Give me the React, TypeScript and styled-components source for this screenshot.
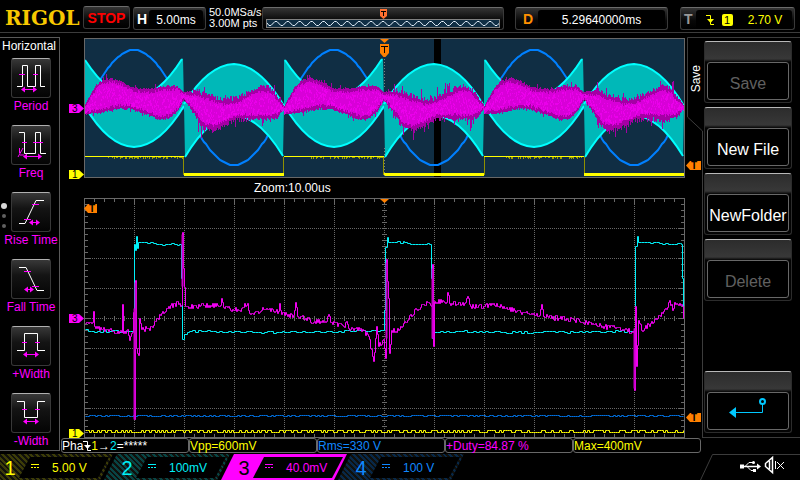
import React from "react";
import styled, { createGlobalStyle, css } from "styled-components";

const C = {
  yellow: "#ffff00",
  cyan: "#00f0f8",
  magenta: "#ff00ff",
  blue: "#0080ff",
  orange: "#ff8000",
  panel: "#102e44",
  line: "#3c3c3c",
  frame: "#686868",
};

const Global = createGlobalStyle`
  * { box-sizing: border-box; }
  body { margin: 0; background: #000; }
  button { font: inherit; color: inherit; background: none; border: 0; padding: 0; cursor: pointer; }
`;

const Screen = styled.div`
  display: flex;
  flex-direction: column;
  min-height: 100vh;
  background: #000;
  color: #fff;
  font-family: "Liberation Sans", Arial, sans-serif;
  font-size: 12px;
  line-height: 14px;
  overflow: hidden;
`;

/* ---------- header ---------- */

const Header = styled.header`
  display: flex;
  align-items: flex-start;
  height: 33px;
  padding: 7px 5px 0 5px;
  border-bottom: 1px solid ${C.line};
`;

const Logo = styled.h1`
  margin: 0;
  width: 78px;
  font-family: "DejaVu Serif", serif;
  font-weight: 700;
  font-size: 20px;
  line-height: 22px;
  color: #f8c800;
`;

const panel = css`
  height: 23px;
  border: 1px solid #3a3a3a;
  border-top-color: #6c6c6c;
  border-radius: 3px;
  background: linear-gradient(#343434, #080808 60%, #000);
`;

const RunState = styled.button`
  ${panel}
  width: 47px;
  margin-top: -1px;
  margin-right: 3px;
  font-weight: 700;
  font-size: 14px;
  line-height: 20px;
  color: #ff0000;
`;

const Setting = styled.button<{ $width: number; $gap?: number }>`
  ${panel}
  display: flex;
  align-items: center;
  width: ${(p) => p.$width}px;
  margin-left: ${(p) => p.$gap ?? 0}px;
  padding-left: 2px;
`;

const SettingName = styled.b<{ $color?: string; $wide?: boolean }>`
  width: ${(p) => (p.$wide ? 20 : 13)}px;
  padding-left: ${(p) => (p.$wide ? 5 : 1)}px;
  font-size: 14px;
  text-align: left;
  color: ${(p) => p.$color ?? "#fff"};
`;

const SettingValue = styled.span<{ $color?: string }>`
  flex: 1;
  display: flex;
  align-items: center;
  justify-content: center;
  align-self: stretch;
  gap: 8px;
  margin: 2px 2px 0 0;
  border-radius: 3px;
  background: #000;
  color: ${(p) => p.$color ?? "#fff"};
`;

const ChannelTag = styled.span`
  width: 11px;
  margin-right: 7px;
  border-radius: 2px;
  background: ${C.yellow};
  color: #000;
  font-size: 11px;
  line-height: 12px;
`;

const Sampling = styled.div`
  width: 54px;
  margin-left: 3px;
  margin-right: -1px;
  font-size: 11px;
  line-height: 11px;
  white-space: nowrap;
`;

const Memory = styled.div`
  ${panel}
  display: flex;
  flex-direction: column;
  align-items: center;
  flex: 1;
  padding: 1px 3px 1px;
`;

const MemoryStrip = styled.svg`
  display: block;
  width: 100%;
  height: 9px;
  border: 1px solid #808080;
  background: ${C.panel};
`;

/* ---------- main area ---------- */

const Main = styled.main`
  display: grid;
  grid-template-columns: 60px minmax(0, 1fr) 98px;
  grid-template-rows: 401px 15px;
  padding-top: 4px;
`;

const Sidebar = styled.aside`
  position: relative;
  grid-row: 1 / 3;
  height: 414px;
  border: 1px solid #5a5a5a;
  border-left: 0;
`;

const SidebarTitle = styled.h2`
  margin: 0 0 4px;
  padding-left: 2px;
  font-size: 12px;
  font-weight: 400;
  line-height: 16px;
  white-space: nowrap;
`;

const MeasureList = styled.div`
  display: flex;
  flex-direction: column;
  gap: 11px;
`;

const MeasureButton = styled.button`
  display: flex;
  flex-direction: column;
  align-items: center;
  width: 62px;
  height: 56px;
  color: ${C.magenta};
  white-space: nowrap;
  line-height: 16px;
`;

const MeasureIcon = styled.svg`
  display: block;
  flex: none;
  width: 40px;
  height: 40px;
  border: 1px solid #383838;
  border-top-color: #b0b0b0;
  border-radius: 3px;
  background: linear-gradient(#383838, #141414 40%, #040404);
`;

const PageDots = styled.svg`
  position: absolute;
  left: 0;
  top: 163px;
  width: 8px;
  height: 30px;
`;

const PlotArea = styled.section`
  display: grid;
  grid-template-columns: 24px minmax(0, 1fr) 17px;
  grid-template-rows: 140px 20px 240px;
  padding-top: 1px;
`;

const Gutter = styled.div`
  position: relative;
  grid-column: 1;
  grid-row: 1 / 4;
`;

const TabGutter = styled.div`
  position: relative;
  grid-column: 3;
  grid-row: 1 / 4;
  margin-top: -1px;
`;

const PlotBox = styled.div<{ $row: number }>`
  position: relative;
  grid-column: 2;
  grid-row: ${(p) => p.$row};
`;

const PlotSvg = styled.svg`
  display: block;
  width: 100%;
  height: 100%;
`;

const ZoomLabel = styled.div`
  grid-column: 2;
  grid-row: 2;
  padding-left: 170px;
  line-height: 20px;
`;

const ChannelMarker = styled.span<{ $top: number; $color: string }>`
  position: absolute;
  left: 9px;
  top: ${(p) => p.$top}px;
  width: 15px;
  height: 9px;
  padding-left: 3px;
  background: ${(p) => p.$color};
  clip-path: polygon(0 0, 10px 0, 100% 50%, 10px 100%, 0 100%);
  color: #000;
  font-size: 10px;
  line-height: 10px;
`;

const LevelMarker = styled.span<{ $top: number; $left: number; $width: number }>`
  position: absolute;
  left: ${(p) => p.$left}px;
  top: ${(p) => p.$top}px;
  width: ${(p) => p.$width}px;
  height: 9px;
  padding-left: 5px;
  background: ${C.orange};
  clip-path: polygon(0 50%, 4px 0, 100% 0, 100% 100%, 4px 100%);
  color: #000;
  font-size: 10px;
  font-weight: 700;
  line-height: 10px;
`;

const TabOutline = styled.svg`
  position: absolute;
  top: 0;
  left: 0;
  width: 18px;
  height: 401px;
`;

const TabLabel = styled.span`
  position: absolute;
  left: 4px;
  top: 28px;
  writing-mode: vertical-rl;
  transform: rotate(180deg);
`;

const TriggerPointer = styled.svg`
  position: absolute;
  left: 50%;
  top: 1px;
  margin-left: -5px;
  width: 10px;
  height: 19px;
`;

const Menu = styled.nav`
  display: flex;
  flex-direction: column;
  align-items: flex-start;
  gap: 4px;
  padding: 3px 2px 4px;
  border: solid ${C.line};
  border-width: 1px 0;
`;

const MenuButton = styled.button<{ $last?: boolean }>`
  width: 88px;
  height: 62px;
  margin-top: ${(p) => (p.$last ? "auto" : "0")};
  padding: 20px 2px 2px;
  border: 1px solid #2c2c2c;
  border-top: 1px solid #b8b8b8;
  border-radius: 3px;
  background: linear-gradient(#2c2c2c, #383838 17px, #040404 20px);
  &:disabled { color: #606060; }
`;

const MenuFace = styled.span`
  display: flex;
  align-items: center;
  justify-content: center;
  height: 38px;
  padding-top: 6px;
  border: 1px solid #686868;
  border-radius: 3px;
  background: #000;
  font-size: 16px;
  white-space: nowrap;
`;

const BackFace = styled(MenuFace)`
  padding: 0 0 4px;
`;

const Results = styled.ul`
  grid-column: 2 / 4;
  display: grid;
  grid-template-columns: repeat(5, 1fr);
  margin: 0 99px 0 1px;
  padding: 0;
  list-style: none;
`;

const Result = styled.li<{ $color?: string }>`
  display: flex;
  align-items: center;
  height: 15px;
  border: 1px solid #686868;
  border-radius: 3px;
  color: ${(p) => p.$color ?? "#fff"};
  white-space: pre;
`;

const Yellow = styled.span`
  color: ${C.yellow};
`;

const Cyan = styled.span`
  color: ${C.cyan};
`;

/* ---------- footer ---------- */

const Footer = styled.footer`
  display: flex;
  justify-content: space-between;
  padding-top: 1px;
  height: 27px;
`;

const Channels = styled.div`
  display: flex;
  margin-left: -13px;
`;

const ChannelButton = styled.button<{ $color: string; $dim: string; $active?: boolean }>`
  display: flex;
  width: 126px;
  height: 26px;
  margin-right: -9px;
  padding: 3px 4px 2px 14px;
  color: ${(p) => p.$color};
  clip-path: polygon(13px 0, 100% 0, calc(100% - 13px) 100%, 0 100%);
  background: ${(p) =>
    p.$active ? p.$color : `repeating-linear-gradient(45deg, ${p.$dim} 0 2px, #10100c 2px 4px)`};
`;

const ChannelNumber = styled.span<{ $active?: boolean }>`
  width: 18px;
  font-size: 20px;
  line-height: 22px;
  color: ${(p) => (p.$active ? "#000" : "inherit")};
`;

const ChannelScale = styled.span`
  display: flex;
  align-items: center;
  flex: 1;
  height: 21px;
  padding-left: 12px;
  gap: 13px;
  background: #000;
  clip-path: polygon(11px 0, 100% 0, calc(100% - 11px) 100%, 0 100%);
  white-space: nowrap;
`;

const Coupling = styled.svg`
  width: 8px;
  height: 8px;
  flex: none;
`;

const Status = styled.div`
  width: 100px;
`;

/* ---------- signal data ---------- */

type Pt = [number, number];

function noise(seed: number) {
  let s = seed;
  return () => {
    s = (s * 1664525 + 1013904223) >>> 0;
    return s / 4294967296;
  };
}

function interp(pts: Pt[], x: number) {
  for (let i = 1; i < pts.length; i++) {
    if (x <= pts[i][0]) {
      const [x0, y0] = pts[i - 1];
      const [x1, y1] = pts[i];
      return y0 + ((y1 - y0) * (x - x0)) / (x1 - x0);
    }
  }
  return pts[pts.length - 1][1];
}

const evenTop: Pt[] = [[0, 68], [9, 52], [16, 44], [26, 41], [36, 44], [49, 51], [66, 52], [79, 49], [93, 49], [100, 55]];
const evenBottom: Pt[] = [[0, 76], [16, 74], [33, 70], [46, 70], [63, 76], [76, 81], [84, 80], [93, 73], [100, 61]];
const oddTop: Pt[] = [[0, 54], [13, 55], [23, 59], [39, 64], [53, 62], [66, 55], [78, 50], [86, 52], [93, 60], [100, 68]];
const oddBottom: Pt[] = [[0, 62], [11, 76], [19, 88], [29, 90], [39, 86], [53, 79], [66, 79], [83, 80], [93, 78], [100, 70]];

function overviewPaths() {
  const r = noise(41);
  let outer = "";
  let core = "";
  let bright = "";
  for (let x = 1; x < 600; x++) {
    const odd = Math.floor(x / 100) % 2 === 1;
    const k = x % 100;
    const edge = Math.min(1, Math.min(k, 100 - k) / 12);
    const t = interp(odd ? oddTop : evenTop, k);
    const b = interp(odd ? oddBottom : evenBottom, k);
    const spike = odd ? 5 : 2;
    const up = (r() * spike + (r() > 0.9 ? r() * spike * 2 : 0)) * edge;
    const down = (r() * spike + (r() > 0.92 ? r() * spike * 2 : 0)) * edge;
    outer += `M${x}.5 ${Math.round(t - up)}V${Math.round(b + down)}`;
    core += `M${x}.5 ${Math.round(t + 1 + r() * 3)}V${Math.round(b - 1 - r() * 3)}`;
    for (let i = 0; i < 3; i++) {
      const y = Math.round(t + (b - t) * (0.15 + 0.7 * r()));
      bright += `M${x}.5 ${y}v${1 + Math.round(r() * 2)}`;
    }
  }
  return { outer, core, bright };
}

function arch(start: number, mid: number, amp: number) {
  let d = "";
  for (let k = 0; k <= 100; k += 2) {
    d += `${k ? "L" : "M"}${start + k} ${Math.round(mid + amp * Math.sin((Math.PI * k) / 100))}`;
  }
  return d;
}

const cyanEven = (s: number) => ({
  fill: `M${s} 21Q${s + 50} 97 ${s + 99} 20L${s + 100} 68Q${s + 76} 108 ${s + 50} 109Q${s + 24} 108 ${s} 67Z`,
  rim: `M${s + 1} 22Q${s + 50} 97 ${s + 98} 21M${s} 67Q${s + 24} 108 ${s + 50} 109Q${s + 76} 108 ${s + 100} 68`,
});
const cyanOdd = (s: number) => ({
  fill: `M${s} 66Q${s + 24} 27 ${s + 50} 26Q${s + 76} 27 ${s + 100} 68L${s + 99} 118Q${s + 50} 37 ${s + 1} 119Z`,
  rim: `M${s} 66Q${s + 24} 27 ${s + 50} 26Q${s + 76} 27 ${s + 100} 68M${s + 1} 119Q${s + 50} 37 ${s + 99} 118`,
});

function yellowFuzz() {
  const r = noise(9);
  let d = "";
  for (const s of [0, 200, 400]) {
    for (let x = s + 22; x < s + 99; x++) if (r() > 0.45) d += `M${x}.5 119v${1 + Math.round(r())}`;
  }
  return d;
}

function trace(points: Pt[], step: number, amp: number, seed: number) {
  const r = noise(seed);
  let d = `M${points[0][0]} ${points[0][1]}`;
  for (let i = 1; i < points.length; i++) {
    const [x0, y0] = points[i - 1];
    const [x1, y1] = points[i];
    for (let x = x0 + step; x < x1; x += step) {
      const y = y0 + ((y1 - y0) * (x - x0)) / (x1 - x0) + (r() - 0.5) * amp;
      d += `H${x}V${Math.round(y)}`;
    }
    d += `H${x1}V${y1}`;
  }
  return d;
}

const cyanTrace: Pt[] = [
  [1, 131], [4, 133], [49, 133], [50, 46], [51, 52], [52, 38], [53, 50], [54, 44], [66, 44], [72, 46], [95, 46],
  [97, 80], [98, 141], [100, 136], [105, 133], [200, 134], [298, 132], [300, 112], [301, 49], [303, 39], [304, 44],
  [320, 44], [328, 46], [345, 46], [347, 80], [348, 140], [350, 134], [362, 133], [450, 134], [549, 133], [551, 48], [553, 38],
  [554, 44], [575, 45], [597, 46], [598, 80], [599, 115],
];

const magentaTrace: Pt[] = [
  [1, 125], [6, 124], [8, 124], [9, 113], [10, 128], [17, 131], [28, 133], [37, 134], [38, 106], [39, 135], [43, 131],
  [45, 142], [48, 134], [49, 114], [50, 221], [51, 82], [52, 150], [54, 157], [55, 120], [57, 131], [68, 129],
  [72, 120], [80, 114], [90, 105], [97, 107], [98, 34], [99, 70], [101, 108], [120, 107], [136, 107], [137, 100],
  [139, 109], [155, 112], [163, 105], [165, 115], [180, 111], [194, 113], [195, 105], [197, 116], [209, 117],
  [211, 104], [213, 118], [230, 123], [242, 123], [244, 116], [246, 124], [260, 129], [262, 123], [265, 132],
  [276, 130], [284, 138], [289, 163], [291, 140], [292, 128], [294, 148], [299, 141], [301, 160], [302, 61],
  [304, 100], [305, 155], [307, 132], [314, 132], [321, 124], [332, 111], [344, 104], [347, 108], [348, 66],
  [349, 148], [350, 103], [362, 104], [363, 94], [365, 105], [380, 105], [383, 98], [386, 108], [410, 107],
  [430, 112], [455, 117], [457, 106], [459, 118], [490, 122], [520, 128], [540, 131], [549, 134], [550, 192],
  [551, 108], [552, 168], [554, 122], [558, 133], [564, 126], [574, 117], [582, 111], [585, 102], [588, 112],
  [590, 104], [598, 108], [599, 120],
];

function comb(y: number, amp: number, seed: number) {
  const r = noise(seed);
  let d = `M1 ${y}`;
  for (let x = 3; x < 600; x += 2) d += `H${x}V${y + (r() > 0.45 ? amp : 0)}`;
  return d;
}

function ticks() {
  let d = "";
  for (let x = 10; x < 600; x += 10) {
    const n = x % 50 === 0 ? 6 : 4;
    d += `M${x}.5 0v${n}M${x}.5 240v-${n}M${x}.5 118v5`;
  }
  for (let y = 6; y < 240; y += 6) {
    const n = y % 30 === 0 ? 6 : 4;
    d += `M0 ${y}.5h${n}M601 ${y}.5h-${n}M298 ${y}.5h5`;
  }
  return d;
}

/* ---------- drawings ---------- */

const TIcon = ({ pointer = true }: { pointer?: boolean }) => (
  <TriggerPointer viewBox="0 0 10 19" aria-hidden="true">
    <path d="M0 0H9L4.500 4Z" fill={C.orange} />
    {pointer && (
      <>
        <path d="M0 5H9V14L5.500 18H3.500L0 14Z" fill={C.orange} />
        <path d="M1 7.500H8M4.500 7V14" stroke="#000" fill="none" />
      </>
    )}
  </TriggerPointer>
);

const FallingEdge = ({ color }: { color: string }) => (
  <svg width="8" height="12" viewBox="0 0 8 12" fill="none" stroke={color} aria-hidden="true">
    <path d="M0 1.500H4.500V10.500H8" />
    <path d="M1 5H8L4.500 9Z" fill={color} stroke="none" />
  </svg>
);

const Overview = () => {
  const m = overviewPaths();
  const even = [0, 200, 400];
  const odd = [100, 300, 500];
  return (
    <PlotSvg viewBox="0 0 601 140" preserveAspectRatio="none" role="img" aria-label="Full memory waveform">
      <rect width="601" height="140" fill={C.panel} />
      <rect x="350" width="7" height="140" fill="#000" />
      <g fill="none" stroke={C.blue} strokeWidth="2">
        {even.map((s) => <path key={s} d={arch(s, 70, -58)} />)}
        {odd.map((s) => <path key={s} d={arch(s, 70, 57)} />)}
      </g>
      {[...even.map(cyanEven), ...odd.map(cyanOdd)].map((c, i) => (
        <g key={i}>
          <path d={c.fill} fill="#00b8b8" />
          <path d={c.rim} fill="none" stroke="#00ffff" strokeWidth="2" />
        </g>
      ))}
      <path d={m.outer} stroke="#a400a4" />
      <path d={m.core} stroke="#d800d8" />
      <path d={m.bright} stroke="#f400f4" opacity="0.7" />
      <path d="M99.500 119V137M199.500 119V137M299.500 119V137M400.500 119V137M500.500 119V137" stroke="#909000" />
      <path d={yellowFuzz()} stroke="#a0a000" />
      {even.map((s) => <path key={s} d={`M${s} 118.500h100`} stroke={C.yellow} strokeWidth="1" />)}
      {odd.map((s) => <path key={s} d={`M${s} 136.500h100`} stroke={C.yellow} strokeWidth="3" />)}
      <path d="M300.500 18V50M300.500 110V140" stroke="#808080" strokeDasharray="1 2" />
      <rect x="0.500" y="0.500" width="600" height="139" fill="none" stroke={C.frame} />
    </PlotSvg>
  );
};

const Detail = () => (
  <PlotSvg viewBox="0 0 601 240" preserveAspectRatio="none" role="img" aria-label="Zoomed waveform">
    <g stroke="#686868" strokeDasharray="1 1" shapeRendering="crispEdges">
      {Array.from({ length: 11 }, (_, i) => (
        <path key={`v${i}`} d={`M${(i + 1) * 50}.5 0V240`} />
      ))}
      {Array.from({ length: 7 }, (_, i) => (
        <path key={`h${i}`} d={`M0 ${(i + 1) * 30}.5H601`} />
      ))}
    </g>
    <path d={ticks()} stroke="#686868" />
    <rect x="0.500" y="0.500" width="600" height="239" fill="none" stroke={C.frame} />
    <g fill="none" transform="translate(0.5 0.5)">
      <path d={comb(218, -1, 3)} stroke="#0070e0" />
      <path d={comb(232, 2, 5)} stroke={C.yellow} />
      <path d={trace(cyanTrace, 3, 1.8, 7)} stroke={C.cyan} />
      <path d={trace(magentaTrace, 1, 5, 23)} stroke="#f000f0" />
      <path d="M50 110V221M51 84V150M98 36V88M302 64V140M550 130V190M348 70V140" stroke="#cc00cc" strokeWidth="2" />
    </g>
  </PlotSvg>
);

type Measure = { name: string; wave: string; marks: string; arrow: [number, number, number]; over?: string };

const measures: Measure[] = [
  { name: "Period", wave: "M6 28.500H11.500V7.500H16.500V28.500H24.500V7.500H29.500V28.500H34", marks: "M8 16.500H14M22 16.500H27", arrow: [11, 25, 31] },
  { name: "Freq", wave: "M8 7.500H13.500V28.500H24.500V7.500H29.500V28.500H35", marks: "M11 17.500H16M22 17.500H32", arrow: [13, 30, 31], over: "M8.500 23V28M12 23L7 32M9 30H13" },
  { name: "Rise Time", wave: "M8 31.500H14L25 8.500H33", marks: "M21 12.500H28M13 27.500H20", arrow: [19, 28, 30] },
  { name: "Fall Time", wave: "M8 8.500H15L26 31.500H33", marks: "M13 12.500H20M21 27.500H28", arrow: [14, 22, 30] },
  { name: "+Width", wave: "M6 24.500H13.500V7.500H26.500V24.500H34", marks: "M11 16.500H16M24 16.500H29", arrow: [13, 27, 28] },
  { name: "-Width", wave: "M6 8.500H13.500V24.500H26.500V8.500H34", marks: "M11 16.500H16M24 16.500H29", arrow: [13, 27, 28] },
];

const channels = [
  { n: "1", scale: "5.00 V", color: C.yellow, dim: "#3c3c08" },
  { n: "2", scale: "100mV", color: C.cyan, dim: "#084444" },
  { n: "3", scale: "40.0mV", color: C.magenta, dim: C.magenta, active: true },
  { n: "4", scale: "100 V", color: "#1088ff", dim: "#082848" },
];

function memoryWave() {
  let d = "M0 3";
  for (let x = 2; x < 234; x += 12) d += `L${x} 5.500H${x + 2}L${x + 6} 1.500H${x + 8}`;
  return d;
}

export default function App() {
  return (
    <Screen>
      <Global />
      <Header>
        <Logo>RIGOL</Logo>
        <RunState type="button">STOP</RunState>
        <Setting type="button" $width={73}>
          <SettingName>H</SettingName>
          <SettingValue>5.00ms</SettingValue>
        </Setting>
        <Sampling>
          50.0MSa/s
          <br />
          3.00M pts
        </Sampling>
        <Memory>
          <svg width="7" height="10" viewBox="0 0 7 10" aria-hidden="true">
            <path d="M0 0H7V7L3.500 10L0 7Z" fill="#ff7030" />
            <path d="M1 2.500H6M3.500 2V7" stroke="#000" />
          </svg>
          <MemoryStrip viewBox="0 0 234 7" preserveAspectRatio="none" aria-label="Memory position">
            <path d={memoryWave()} fill="none" stroke="#e8f4ff" />
          </MemoryStrip>
        </Memory>
        <Setting type="button" $width={153} $gap={11}>
          <SettingName $wide $color="#ff9000">D</SettingName>
          <SettingValue>5.29640000ms</SettingValue>
        </Setting>
        <Setting type="button" $width={115} $gap={12}>
          <SettingName $color="#989898">T</SettingName>
          <SettingValue $color={C.yellow}>
            <FallingEdge color={C.yellow} />
            <ChannelTag>1</ChannelTag>
            <span>2.70 V</span>
          </SettingValue>
        </Setting>
      </Header>

      <Main>
        <Sidebar>
          <SidebarTitle>Horizontal</SidebarTitle>
          <MeasureList>
            {measures.map((m) => {
              const [a, b, y] = m.arrow;
              return (
                <MeasureButton type="button" key={m.name}>
                  <MeasureIcon viewBox="1 1 38 38" fill="none" aria-hidden="true">
                    <path d={m.wave} stroke="#fff" />
                    <path d={m.marks} stroke={C.magenta} />
                    {m.over && <path d={m.over} stroke={C.magenta} />}
                    <path d={`M${a} ${y}.5H${b}`} stroke={C.magenta} />
                    <path d={`M${a - 1} ${y}.5l4 -3v6zM${b + 1} ${y}.5l-4 -3v6z`} fill={C.magenta} />
                  </MeasureIcon>
                  {m.name}
                </MeasureButton>
              );
            })}
          </MeasureList>
          <PageDots viewBox="0 0 8 30" aria-hidden="true">
            <circle cx="4" cy="5" r="3" fill="#d8d8d8" />
            <circle cx="4" cy="15" r="2" fill="#606060" />
            <circle cx="4" cy="25" r="2" fill="#606060" />
          </PageDots>
        </Sidebar>

        <PlotArea>
          <Gutter>
            <ChannelMarker $top={66} $color={C.magenta}>3</ChannelMarker>
            <ChannelMarker $top={132} $color={C.yellow}>1</ChannelMarker>
            <ChannelMarker $top={276} $color={C.magenta}>3</ChannelMarker>
            <ChannelMarker $top={391} $color={C.yellow}>1</ChannelMarker>
          </Gutter>
          <PlotBox $row={1}>
            <Overview />
            <TIcon />
          </PlotBox>
          <ZoomLabel>Zoom:10.00us</ZoomLabel>
          <PlotBox $row={3}>
            <Detail />
            <TIcon pointer={false} />
            <LevelMarker $left={0} $top={6} $width={13}>T</LevelMarker>
          </PlotBox>
          <TabGutter>
            <TabOutline viewBox="0 0 18 401" fill="none" stroke={C.line} aria-hidden="true">
              <path d="M18 0.500H2.500V80L17.500 94V401" />
            </TabOutline>
            <TabLabel>Save</TabLabel>
            <LevelMarker $left={1} $top={124} $width={15}>T</LevelMarker>
            <LevelMarker $left={1} $top={376} $width={15}>T</LevelMarker>
          </TabGutter>
        </PlotArea>

        <Menu aria-label="Save">
          <MenuButton type="button" disabled><MenuFace>Save</MenuFace></MenuButton>
          <MenuButton type="button"><MenuFace>New File</MenuFace></MenuButton>
          <MenuButton type="button"><MenuFace>NewFolder</MenuFace></MenuButton>
          <MenuButton type="button" disabled><MenuFace>Delete</MenuFace></MenuButton>
          <MenuButton type="button" $last aria-label="Back">
            <BackFace>
              <svg width="38" height="22" viewBox="0 0 38 22" fill="none" aria-hidden="true">
                <path d="M4 14.500H33.500V6" stroke="#00c8ff" />
                <path d="M0 14.500L7 9V20Z" fill="#00c8ff" />
                <circle cx="33.500" cy="3.500" r="2.500" stroke="#00c8ff" strokeWidth="2" />
              </svg>
            </BackFace>
          </MenuButton>
        </Menu>

        <Results>
          <Result>
            Pha
            <FallingEdge color="#fff" />
            <span><Yellow>1</Yellow>→<Cyan>2</Cyan>=*****</span>
          </Result>
          <Result $color={C.yellow}>Vpp=600mV</Result>
          <Result $color="#1088ff">Rms=330 V</Result>
          <Result $color={C.magenta}>+Duty=84.87 %</Result>
          <Result $color={C.yellow}>Max=400mV</Result>
        </Results>
      </Main>

      <Footer>
        <Channels>
          {channels.map((c) => (
            <ChannelButton type="button" key={c.n} $color={c.color} $dim={c.dim} $active={c.active}>
              <ChannelNumber $active={c.active}>{c.n}</ChannelNumber>
              <ChannelScale>
                <Coupling viewBox="0 0 8 8" stroke="currentColor" aria-hidden="true">
                  <path d="M0 0.500H8" />
                  <path d="M0 3.500H8" strokeDasharray="2 1" />
                </Coupling>
                {c.scale}
              </ChannelScale>
            </ChannelButton>
          ))}
        </Channels>
        <Status>
          <svg width="100" height="26" viewBox="0 0 100 26" fill="none" role="img" aria-label="USB connected, sound muted">
            <path d="M0.500 26L12.500 0.500H100" stroke={C.line} />
            <g stroke="#fff">
              <path d="M41 12.500H58" strokeWidth="1.500" />
              <path d="M45 12.500L49 8.500H53M47 12.500L51 16.500H54" />
              <path d="M57 9.500L61 12.500L57 15.500Z" fill="#fff" stroke="none" />
              <rect x="40" y="10.500" width="4" height="4" fill="#fff" stroke="none" />
              <circle cx="53.500" cy="8.500" r="1.500" fill="#fff" stroke="none" />
              <rect x="53" y="15" width="3" height="3" fill="#fff" stroke="none" />
              <path d="M65.500 9.500L72.500 3.500V18.500L65.500 12.500ZM69.500 7V15" strokeWidth="1.500" />
              <path d="M75.500 7V15M77 8L84 15M84 8L77 15" />
            </g>
          </svg>
        </Status>
      </Footer>
    </Screen>
  );
}
